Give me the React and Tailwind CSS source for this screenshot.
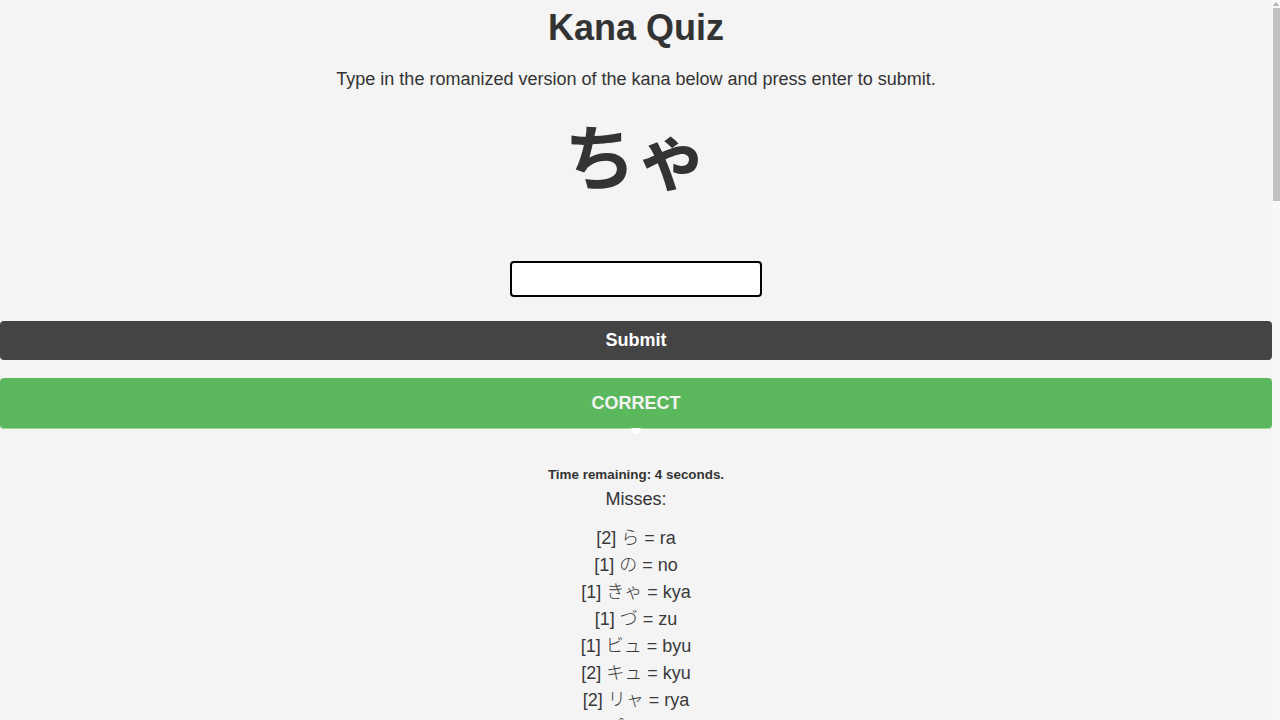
import React from "react";

const misses = [
  [2, "ら", "ra"],
  [1, "の", "no"],
  [1, "きゃ", "kya"],
  [1, "づ", "zu"],
  [1, "ビュ", "byu"],
  [2, "キュ", "kyu"],
  [2, "リャ", "rya"],
  [1, "ぴょ", "pyo"],
];

export default function App() {
  return (
    <div
      className="flex h-screen overflow-hidden bg-[#f4f4f4] text-[#333333]"
      style={{ fontFamily: '"Liberation Sans", Arial, "Noto Sans CJK JP", sans-serif' }}
    >
      <main className="flex-1 min-w-0 overflow-hidden">
        <div className="flex flex-col items-center text-center">
          <h1 className="mt-[7px] text-[36px] leading-[41px] font-bold">Kana Quiz</h1>
          <p className="mt-[18px] text-[18px] leading-[27px]">
            Type in the romanized version of the kana below and press enter to submit.
          </p>
          <div
            className="mt-[20px] text-[72px] leading-[80px] font-bold"
            style={{ fontFamily: '"Noto Sans CJK JP", sans-serif' }}
          >
            ちゃ
          </div>
          <input
            type="text"
            className="mt-[68px] w-[252px] h-[36px] bg-white border-2 border-black rounded-[4px] outline-none px-2 text-[18px]"
          />
          <button className="mt-[24px] w-full h-[39px] bg-[#444444] text-white text-[18px] font-bold rounded-[4px]">
            Submit
          </button>
          <div className="relative mt-[18px] w-full h-[51px] bg-[#5cb85c] rounded-[4px] flex items-center justify-center border-b border-[#9ad99a]">
            <span className="text-[18px] font-bold text-[#f4f4f4]">CORRECT</span>
            <span className="absolute left-1/2 -translate-x-1/2 top-full w-[9px] h-[6px] rounded-b-full bg-white"></span>
          </div>
          <div className="mt-[38px] text-[13.4px] leading-[16px] font-bold">Time remaining: 4 seconds.</div>
          <div className="mt-[3px] text-[18px] leading-[27px]">Misses:</div>
          <ul className="mt-[12px] text-[18px] leading-[27px] text-[#3a3a3a]">
            {misses.map(([n, k, r], i) => (
              <li key={i}>
                [{n}] <span className="font-light">{k}</span> = {r}
              </li>
            ))}
          </ul>
        </div>
      </main>
      <div className="w-[8px] shrink-0 bg-[#f8f8f8] flex flex-col items-center">
        <div className="mt-[2px] w-0 h-0 border-l-[3px] border-r-[3px] border-b-[4px] border-l-transparent border-r-transparent border-b-[#b0b0b0]"></div>
        <div className="mt-[2px] w-[7px] h-[193px] shrink-0 bg-[#c1c1c1]"></div>
      </div>
    </div>
  );
}
